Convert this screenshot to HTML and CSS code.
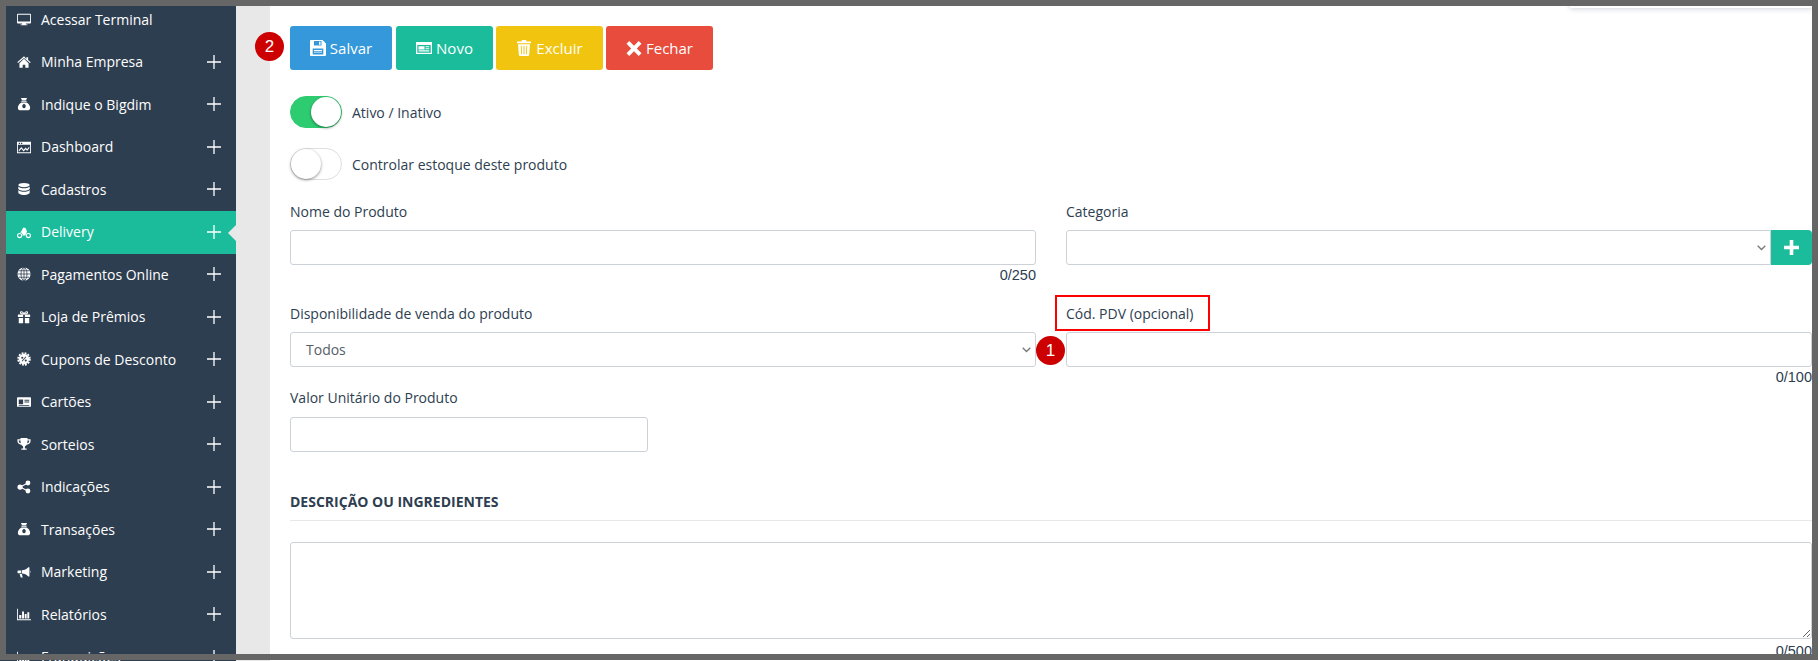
FILE: index.html

```html
<!DOCTYPE HTML>
<html>
<head>
<meta name="viewport" content="width=device-width, initial-scale=1">
<link rel="stylesheet" href="styles.css">
</head>
<body>
    <svg class="defs" width="0" height="0">
        <symbol id="i-desktop" viewBox="0 0 16 16"><path fill-rule="evenodd" d="M1 2h14a1 1 0 0 1 1 1v9a1 1 0 0 1-1 1H10l.4 1.300H12v.7H4v-.7h1.600L6 13H1a1 1 0 0 1-1-1V3a1 1 0 0 1 1-1zm0 1v7.800h14V3z"/></symbol>
        <symbol id="i-home" viewBox="0 0 16 16"><path d="M8 1.500.3 8.200l.9 1L8 3.400l6.800 5.800.9-1-3-2.600V2.500h-2v2.200zM2.800 9.500 8 4.300l5.200 5.200v5H9.500V11h-3v3.500H2.800z"/></symbol>
        <symbol id="i-bag" viewBox="0 0 16 16"><path fill-rule="evenodd" d="M4.500 1h7L10.300 3.600H5.700zM5 4.400h6v1H5zM5 6.200h6c2.300 1.300 4 3.800 4 6 0 2-1.200 3-3 3H4c-1.800 0-3-1-3-3 0-2.200 1.700-4.700 4-6zM8 8a2 2.400 0 1 0 .01 0z"/></symbol>
        <symbol id="i-dash" viewBox="0 0 16 16"><path fill-rule="evenodd" d="M0 2h16v13H0zM1 5.500V14h14V5.500zM2 3v1.500h1.500V3zm2.500 0v1.500H6V3z"/><path d="M2 11.500 5 8l2.500 3 2.500-2.500 1.500 2L14 7.500v2l-2.500 3.200L10 10.500 7.500 13 5 10l-3 3.500z"/></symbol>
        <symbol id="i-db" viewBox="0 0 16 16"><ellipse cx="8" cy="3.500" rx="6.500" ry="2.500"/><path d="M1.500 5.200C2.500 6.700 5 7.200 8 7.200s5.500-.5 6.500-2V8c-1 1.500-3.500 2-6.500 2S2.500 9.500 1.500 8zM1.500 9.200c1 1.500 3.500 2 6.500 2s5.500-.5 6.500-2V12c0 1.500-3 2.800-6.500 2.800S1.500 13.500 1.500 12z"/></symbol>
        <symbol id="i-moto" viewBox="0 0 16 16"><path fill-rule="evenodd" d="M3 9a3 3 0 1 1 0 6 3 3 0 0 1 0-6zm0 1.300a1.700 1.700 0 1 0 0 3.400 1.700 1.700 0 0 0 0-3.400zM13 9a3 3 0 1 1 0 6 3 3 0 0 1 0-6zm0 1.300a1.700 1.700 0 1 0 0 3.400 1.700 1.700 0 0 0 0-3.400z"/><path d="M7 3h2.500l2 4.500L9.500 12H6.500c0-2-1-3.500-3-3.800L5 7z"/></symbol>
        <symbol id="i-globe" viewBox="0 0 16 16"><circle cx="8" cy="8" r="7.500"/><g fill="none" stroke="#2d3e50" stroke-width=".9"><ellipse cx="8" cy="8" rx="3.400" ry="7.500"/><path d="M8 .5v15M.5 8h15M1.700 4.300h12.600M1.700 11.700h12.600"/></g></symbol>
        <symbol id="i-gift" viewBox="0 0 16 16"><path d="M1 5h6v3H1zM9 5h6v3H9zM2 9h5v6H2zM9 9h5v6H9z"/><path fill="none" stroke="#fff" stroke-width="1.200" d="M8 4.500C6.500 1.500 3.500 1.500 4 3.200 4.300 4.300 6.500 4.500 8 4.500c1.500 0 3.700-.2 4-1.300C12.500 1.500 9.500 1.500 8 4.500z"/></symbol>
        <symbol id="i-coupon" viewBox="0 0 16 16"><circle cx="8" cy="8" r="5.900"/><circle cx="8" cy="8" r="6.700" fill="none" stroke="#fff" stroke-width="2" stroke-dasharray="2.100 1.400"/><g fill="#2d3e50"><circle cx="6" cy="6.500" r="1.200"/><circle cx="10" cy="9.700" r="1.200"/><path d="M9.800 5.200l.8.6-4.400 5-.8-.6z"/></g></symbol>
        <symbol id="i-card" viewBox="0 0 16 16"><path fill-rule="evenodd" d="M1 2.500h14a1 1 0 0 1 1 1v9a1 1 0 0 1-1 1H1a1 1 0 0 1-1-1v-9a1 1 0 0 1 1-1zM2 5v5.500h5V5zm6.500.5v1h5.500v-1zm0 2v1h5.500v-1zM2 11.500v.8h12v-.8z"/></symbol>
        <symbol id="i-trophy" viewBox="0 0 16 16"><path fill-rule="evenodd" d="M4 1h8v1.500h3.500v2c0 2.300-1.800 4-4.300 4.300C10.500 9.800 9.500 10.500 9 10.800V13h2v1.500H5V13h2v-2.200c-.5-.3-1.500-1-2.200-2C2.300 8.500.5 6.800.5 4.500v-2H4zM2 4v.5c0 1.300.9 2.300 2.300 2.700C4.100 6.200 4 5.100 4 4zm10 0c0 1.100-.1 2.200-.3 3.200 1.400-.4 2.300-1.400 2.300-2.700V4z"/></symbol>
        <symbol id="i-share" viewBox="0 0 16 16"><circle cx="12.500" cy="3.500" r="2.800"/><circle cx="12.500" cy="12.500" r="2.800"/><circle cx="3.500" cy="8" r="3"/><path fill="none" stroke="#fff" stroke-width="1.200" d="M12.500 3.500 3.500 8l9 4.500"/></symbol>
        <symbol id="i-horn" viewBox="0 0 16 16"><path d="M13 2.500h1.200v10.500H13C11 10.800 8.500 9.800 5.500 9.600V6c3-.2 5.500-1.300 7.500-3.500zM15 6.300c.7.400.7 2.500 0 2.900zM1 6.300h3.700v3.200H1c-.6-.8-.6-2.400 0-3.200zM3 10.300h2.600l.9 4H4.300z"/></symbol>
        <symbol id="i-chart" viewBox="0 0 16 16"><path d="M0 2h1v12h15v1H0zM2.500 9H5v4H2.500zM5.800 5H8v8H5.800zM8.800 8H11v5H8.800zM11.800 6H14v7h-2.200z"/></symbol>
        <symbol id="i-save" viewBox="0 0 16 16"><path fill-rule="evenodd" d="M1 0h11.500L16 3.500V15a1 1 0 0 1-1 1H1a1 1 0 0 1-1-1V1a1 1 0 0 1 1-1zm3 1v4.500h7.500V1zm5 .7h1.500v3H9zM2.700 8.500v6h10.600v-6z"/><path d="M4 10h8v.9H4zM4 11.700h8v.9H4z"/></symbol>
        <symbol id="i-win" viewBox="0 0 16 16"><path fill-rule="evenodd" d="M0 2h16v12H0zm1.300 3v7.700h13.400V5zM2.500 6.300h6v3.200h-6zM9.500 6.300h3.700v1H9.500zm0 2h3.700v1H9.500zM2.500 10.300h10.700v1.100H2.500z"/></symbol>
        <symbol id="i-trash" viewBox="0 0 16 16"><path fill-rule="evenodd" d="M6 0h4l.7 1.500H15v1.800H1V1.500h4.300zM2 4.200h12l-.8 10.300a1.500 1.500 0 0 1-1.500 1.500H4.300a1.500 1.500 0 0 1-1.500-1.500zm2.800 1.500.4 8.600h.9l-.4-8.600zm2.700 0v8.600h1V5.700zm2.800 0-.4 8.600h.9l.4-8.600z"/></symbol>
        <symbol id="i-times" viewBox="0 0 16 16"><path d="M3.300 1 8 5.700 12.700 1 15.500 3.800 10.800 8.500l4.700 4.700-2.800 2.800L8 11.300 3.300 16 .5 13.200 5.200 8.500.5 3.800z"/></symbol>
        <symbol id="i-plus" viewBox="0 0 14 14"><path d="M6.350 0h1.300v6.350H14v1.300H7.650V14h-1.300V7.650H0v-1.300h6.350z"/></symbol>
        <symbol id="i-add" viewBox="0 0 14 14"><path d="M5.300 0h3.400v5.300H14v3.400H8.700V14H5.300V8.700H0V5.300h5.300z"/></symbol>
    </svg>

    <div class="page">
        <nav class="sidebar">
            <a class="nav_item"><svg class="nav_icon"><use href="#i-desktop"/></svg><span class="nav_text">Acessar Terminal</span></a>
            <a class="nav_item"><svg class="nav_icon"><use href="#i-home"/></svg><span class="nav_text">Minha Empresa</span><svg class="nav_plus"><use href="#i-plus"/></svg></a>
            <a class="nav_item"><svg class="nav_icon"><use href="#i-bag"/></svg><span class="nav_text">Indique o Bigdim</span><svg class="nav_plus"><use href="#i-plus"/></svg></a>
            <a class="nav_item"><svg class="nav_icon"><use href="#i-dash"/></svg><span class="nav_text">Dashboard</span><svg class="nav_plus"><use href="#i-plus"/></svg></a>
            <a class="nav_item"><svg class="nav_icon"><use href="#i-db"/></svg><span class="nav_text">Cadastros</span><svg class="nav_plus"><use href="#i-plus"/></svg></a>
            <a class="nav_item active"><svg class="nav_icon"><use href="#i-moto"/></svg><span class="nav_text">Delivery</span><svg class="nav_plus"><use href="#i-plus"/></svg></a>
            <a class="nav_item"><svg class="nav_icon"><use href="#i-globe"/></svg><span class="nav_text">Pagamentos Online</span><svg class="nav_plus"><use href="#i-plus"/></svg></a>
            <a class="nav_item"><svg class="nav_icon"><use href="#i-gift"/></svg><span class="nav_text">Loja de Prêmios</span><svg class="nav_plus"><use href="#i-plus"/></svg></a>
            <a class="nav_item"><svg class="nav_icon"><use href="#i-coupon"/></svg><span class="nav_text">Cupons de Desconto</span><svg class="nav_plus"><use href="#i-plus"/></svg></a>
            <a class="nav_item"><svg class="nav_icon"><use href="#i-card"/></svg><span class="nav_text">Cartões</span><svg class="nav_plus"><use href="#i-plus"/></svg></a>
            <a class="nav_item"><svg class="nav_icon"><use href="#i-trophy"/></svg><span class="nav_text">Sorteios</span><svg class="nav_plus"><use href="#i-plus"/></svg></a>
            <a class="nav_item"><svg class="nav_icon"><use href="#i-share"/></svg><span class="nav_text">Indicações</span><svg class="nav_plus"><use href="#i-plus"/></svg></a>
            <a class="nav_item"><svg class="nav_icon"><use href="#i-bag"/></svg><span class="nav_text">Transações</span><svg class="nav_plus"><use href="#i-plus"/></svg></a>
            <a class="nav_item"><svg class="nav_icon"><use href="#i-horn"/></svg><span class="nav_text">Marketing</span><svg class="nav_plus"><use href="#i-plus"/></svg></a>
            <a class="nav_item"><svg class="nav_icon"><use href="#i-chart"/></svg><span class="nav_text">Relatórios</span><svg class="nav_plus"><use href="#i-plus"/></svg></a>
            <a class="nav_item"><svg class="nav_icon"><use href="#i-chart"/></svg><span class="nav_text">Franquições</span><svg class="nav_plus"><use href="#i-plus"/></svg></a>
        </nav>

        <main class="panel">
            <div class="top_shadow"></div>
            <div class="actions">
                <span class="badge badge_two">2</span>
                <button class="btn btn_blue"><svg class="btn_icon"><use href="#i-save"/></svg>Salvar</button>
                <button class="btn btn_teal"><svg class="btn_icon"><use href="#i-win"/></svg>Novo</button>
                <button class="btn btn_yellow"><svg class="btn_icon"><use href="#i-trash"/></svg>Excluir</button>
                <button class="btn btn_red"><svg class="btn_icon"><use href="#i-times"/></svg>Fechar</button>
            </div>

            <div class="switch_row first">
                <span class="switch on"></span>
                <span class="switch_label">Ativo / Inativo</span>
            </div>
            <div class="switch_row">
                <span class="switch"></span>
                <span class="switch_label">Controlar estoque deste produto</span>
            </div>

            <div class="form_row row_one">
                <div class="field">
                    <label>Nome do Produto</label>
                    <input class="control" type="text">
                    <div class="count">0/250</div>
                </div>
                <div class="field">
                    <label>Categoria</label>
                    <div class="input_group">
                        <select class="control pick"></select>
                        <button class="add_btn"><svg class="add_icon"><use href="#i-add"/></svg></button>
                    </div>
                </div>
            </div>

            <div class="form_row row_two">
                <div class="field">
                    <label>Disponibilidade de venda do produto</label>
                    <select class="control pick"><option>Todos</option></select>
                    <span class="badge badge_one">1</span>
                </div>
                <div class="field">
                    <label>Cód. PDV (opcional)</label>
                    <span class="red_box"></span>
                    <input class="control" type="text">
                    <div class="count">0/100</div>
                </div>
            </div>

            <div class="field field_value">
                <label>Valor Unitário do Produto</label>
                <input class="control" type="text">
            </div>

            <h4 class="section_title">Descrição ou ingredientes</h4>
            <textarea class="control text_box"></textarea>
            <div class="count count_text">0/500</div>
        </main>
    </div>

    <div class="frame"></div>
</body>
</html>
```

FILE: styles.css

```css
* {
    box-sizing: border-box;
}
html, body {
    margin: 0;
    height: 100%;
    overflow: hidden;
}
body {
    background-color: #e8e8e8;
    font-family: "Open Sans", sans-serif;
    font-size: 14px;
    color: #2d3e50;
}
.defs {
    position: absolute;
}
svg {
    fill: currentColor;
}
.page {
    display: flex;
    height: 100vh;
}
/* The gray border of the screenshot, on top of everything */
.frame {
    position: fixed;
    top: 0;
    left: 0;
    right: 1px;
    bottom: 1px;
    border: 6px solid #666666;
    pointer-events: none;
}
/* Sidebar */
.sidebar {
    width: 236px;
    flex: none;
    background-color: #2d3e50;
    overflow: hidden;
}
.nav_item {
    display: flex;
    align-items: center;
    height: 42.5px;
    padding-left: 17px;
    padding-bottom: 2px;
    color: white;
    position: relative;
}
.nav_item:first-child {
    margin-top: -1.25px;
}
.nav_icon {
    width: 14px;
    height: 14px;
    flex: none;
    margin-right: 10px;
}
.nav_text {
    flex: 1;
}
.nav_plus {
    width: 14px;
    height: 14px;
    flex: none;
    margin-right: 15px;
}
.active {
    background-color: #1abc9c;
}
/* Arrow pointing at the panel */
.active::after {
    content: '';
    position: absolute;
    right: 0;
    top: 50%;
    margin-top: -8px;
    border-style: solid;
    border-width: 8px 8px 8px 0;
    border-color: transparent #e8e8e8 transparent transparent;
}
/* Main panel */
.panel {
    flex: 1;
    min-width: 0;
    margin-left: 34px;
    padding: 26px 7px 0 20px;
    background-color: white;
    position: relative;
}
.top_shadow {
    position: absolute;
    top: -10px;
    right: 7px;
    width: 242px;
    height: 18px;
    background-color: white;
    box-shadow: 0 1px 5px rgba(60, 80, 110, .25);
}
.actions {
    display: flex;
    gap: 3px;
    position: relative;
}
.btn {
    display: flex;
    align-items: center;
    justify-content: center;
    height: 44px;
    padding: 0;
    border: 0;
    border-radius: 3px;
    color: white;
    font-family: "Open Sans", sans-serif;
    font-size: 15px;
}
.btn_icon {
    width: 16px;
    height: 16px;
    margin-right: 4px;
}
.btn_blue {
    width: 102px;
    margin-right: 1px;
    background-color: #3498db;
}
.btn_teal {
    width: 97px;
    background-color: #1abc9c;
}
.btn_yellow {
    width: 107px;
    background-color: #f1c40f;
}
.btn_red {
    width: 107px;
    background-color: #e74c3c;
}
.switch_row {
    display: flex;
    align-items: center;
    margin-top: 20px;
}
.first {
    margin-top: 26px;
}
.switch {
    display: block;
    width: 52px;
    height: 32px;
    border: 1px solid #dfdfdf;
    border-radius: 16px;
    margin-right: 10px;
    position: relative;
    background-color: white;
}
.switch::after {
    content: '';
    position: absolute;
    top: 0;
    left: 0;
    width: 30px;
    height: 30px;
    border-radius: 50%;
    background-color: white;
    box-shadow: 0 1px 3px rgba(0, 0, 0, .45);
}
.on {
    background-color: #2ecc71;
    border-color: #2ecc71;
}
.on::after {
    left: 20px;
}
/* Form */
.form_row {
    display: grid;
    grid-template-columns: 1fr 1fr;
    column-gap: 30px;
}
.row_one {
    margin-top: 22px;
    margin-bottom: 19px;
}
.row_two {
    margin-bottom: 1px;
}
.field {
    position: relative;
    min-width: 0;
}
.field label {
    display: block;
    line-height: 20px;
    margin-bottom: 8px;
}
.control {
    display: block;
    width: 100%;
    height: 35px;
    border: 1px solid #cdd2d9;
    border-radius: 3px;
    padding: 0 15px;
    background-color: white;
    font-family: "Open Sans", sans-serif;
    font-size: 14px;
    color: #555d66;
}
/* Thin gray chevron instead of the heavy browser arrow */
.pick {
    appearance: none;
    background-image: url("data:image/svg+xml,%3Csvg xmlns='http://www.w3.org/2000/svg' width='9' height='6'%3E%3Cpath d='M.7.7 4.500 4.500 8.300.7' fill='none' stroke='%23777' stroke-width='1.300'/%3E%3C/svg%3E");
    background-repeat: no-repeat;
    background-position: right 4px center;
}
.count {
    font-family: "Liberation Sans", sans-serif;
    font-size: 14.5px;
    line-height: 20px;
    text-align: right;
}
.input_group {
    display: flex;
}
.input_group .control {
    flex: 1;
    min-width: 0;
    border-radius: 3px 0 0 3px;
}
.add_btn {
    flex: none;
    width: 41px;
    height: 35px;
    padding: 0;
    border: 0;
    border-radius: 0 4px 4px 0;
    background-color: #1abc9c;
    color: white;
}
.add_icon {
    display: block;
    width: 15px;
    height: 15px;
    margin: 0 auto;
}
.field_value {
    width: 358px;
}
.field_value label {
    margin-bottom: 9px;
}
.section_title {
    margin: 40px 0 21px;
    padding-bottom: 8px;
    border-bottom: 1px solid #e8e8e8;
    font-size: 14px;
    line-height: 20px;
    font-weight: 700;
    text-transform: uppercase;
}
.text_box {
    height: 97px;
    padding: 8px 15px;
    resize: vertical;
}
.count_text {
    margin-top: 2px;
}
/* Annotations over the screenshot */
.badge {
    position: absolute;
    width: 29px;
    height: 29px;
    border-radius: 50%;
    background-color: #cc0000;
    color: white;
    font-family: "Liberation Sans", sans-serif;
    font-size: 17px;
    line-height: 29px;
    text-align: center;
}
.badge_two {
    left: -35px;
    top: 6px;
}
.badge_one {
    right: -29px;
    top: 32px;
}
.red_box {
    position: absolute;
    left: -11px;
    top: -9px;
    width: 155px;
    height: 36px;
    border: 2px solid #ff0000;
}
```
